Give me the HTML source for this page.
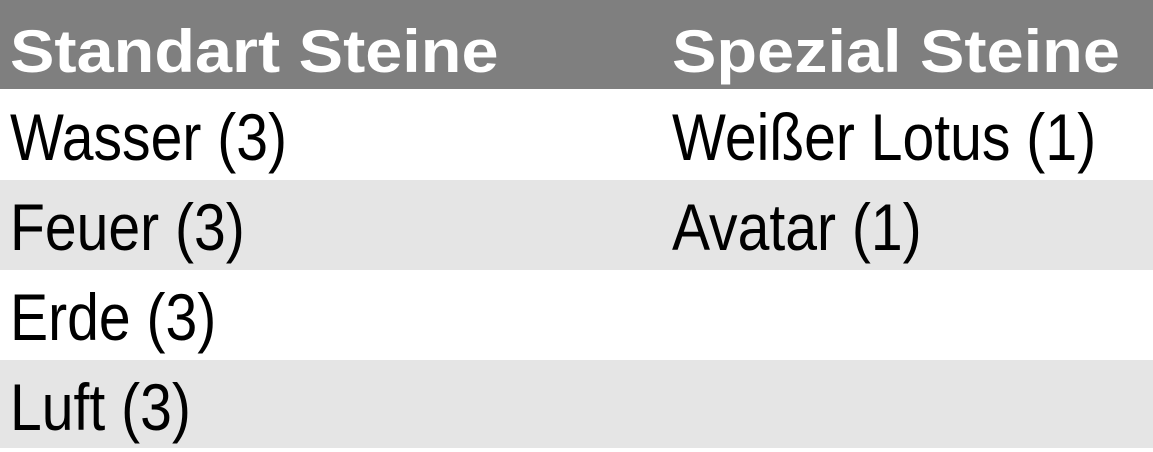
<!DOCTYPE html>
<html><head><meta charset="utf-8"><style>
body{margin:0;width:1153px;height:452px;overflow:hidden;background:#fff;font-family:"Liberation Sans",sans-serif;}
.r{position:absolute;left:0;width:1153px;}
.h{top:0;height:89px;background:#7f7f7f;}
.g{background:#e5e5e5;}
.t{position:absolute;white-space:nowrap;transform-origin:0 0;}
.hd{color:#fff;font-weight:bold;font-size:60px;top:17px;transform:scaleX(1.11);}
.b{color:#000;font-size:66px;transform:scaleX(0.865);}
</style></head><body>
<div class="r h"></div>
<div class="r" style="top:89px;height:91px"></div>
<div class="r g" style="top:180px;height:90px"></div>
<div class="r" style="top:270px;height:90px"></div>
<div class="r g" style="top:360px;height:88px"></div>
<div class="t hd" style="left:10px">Standart Steine</div>
<div class="t hd" style="left:672px">Spezial Steine</div>
<div class="t b" style="left:10px;top:99px">Wasser (3)</div>
<div class="t b" style="left:672px;top:99px">Weißer Lotus (1)</div>
<div class="t b" style="left:10px;top:189px">Feuer (3)</div>
<div class="t b" style="left:672px;top:189px">Avatar (1)</div>
<div class="t b" style="left:10px;top:279px">Erde (3)</div>
<div class="t b" style="left:10px;top:369px">Luft (3)</div>
</body></html>
